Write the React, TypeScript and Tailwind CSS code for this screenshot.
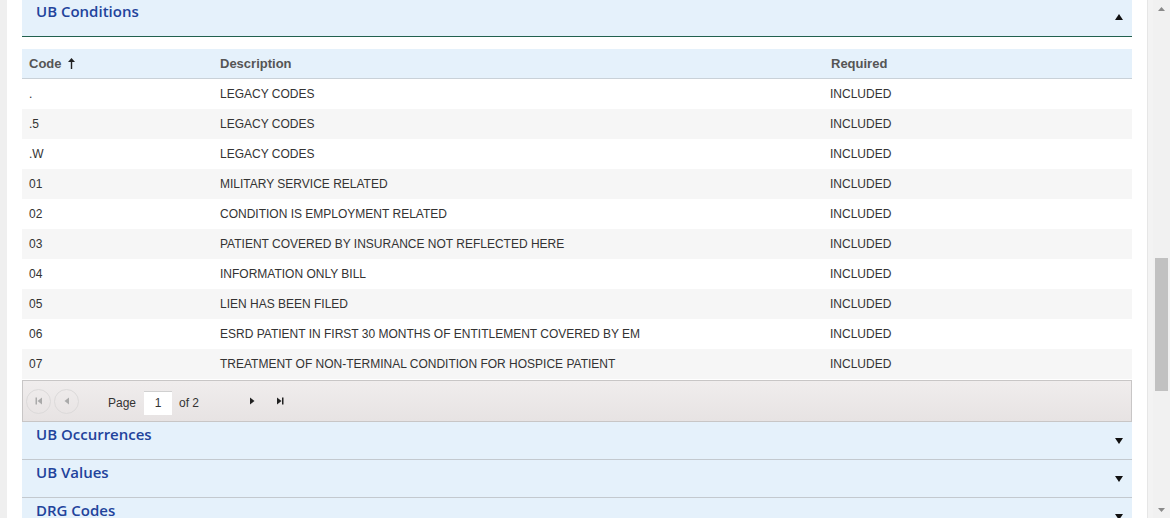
import React from "react";

interface ConditionRow {
  code: string;
  description: string;
  required: string;
}

const rows: ConditionRow[] = [
  { code: ".", description: "LEGACY CODES", required: "INCLUDED" },
  { code: ".5", description: "LEGACY CODES", required: "INCLUDED" },
  { code: ".W", description: "LEGACY CODES", required: "INCLUDED" },
  { code: "01", description: "MILITARY SERVICE RELATED", required: "INCLUDED" },
  { code: "02", description: "CONDITION IS EMPLOYMENT RELATED", required: "INCLUDED" },
  { code: "03", description: "PATIENT COVERED BY INSURANCE NOT REFLECTED HERE", required: "INCLUDED" },
  { code: "04", description: "INFORMATION ONLY BILL", required: "INCLUDED" },
  { code: "05", description: "LIEN HAS BEEN FILED", required: "INCLUDED" },
  { code: "06", description: "ESRD PATIENT IN FIRST 30 MONTHS OF ENTITLEMENT COVERED BY EM", required: "INCLUDED" },
  { code: "07", description: "TREATMENT OF NON-TERMINAL CONDITION FOR HOSPICE PATIENT", required: "INCLUDED" },
];

const Triangle = ({ up }: { up?: boolean }) => (
  <svg width="8" height="6" viewBox="0 0 8 6" className="block">
    {up ? <polygon points="4,0 8,6 0,6" fill="#111" /> : <polygon points="0,0 8,0 4,6" fill="#111" />}
  </svg>
);

// collapsed accordion panel
const Section = ({ title }: { title: string }) => (
  <div className="h-[38px] bg-[#e5f1fb] border-b border-[#c3c9cf] flex justify-between pl-[14px] pr-[9px]">
    <span className="pt-[2px] text-[15px] leading-[20px] font-semibold text-[#22439b] font-['Open_Sans',sans-serif]">
      {title}
    </span>
    <span className="pt-[16px]">
      <Triangle />
    </span>
  </div>
);

const PagerButton = ({ children, disabled }: { children: React.ReactNode; disabled?: boolean }) => (
  <div
    className={
      disabled
        ? "w-[25px] h-[25px] rounded-full border border-[#dcdada] flex items-center justify-center text-[#aaa]"
        : "w-[25px] h-[25px] rounded-full flex items-center justify-center text-[#222]"
    }
  >
    {children}
  </div>
);

const App = () => {
  return (
    <div className="w-[1170px] h-[518px] overflow-hidden flex bg-white font-['Liberation_Sans',Arial,sans-serif]">
      <div className="w-[7px] bg-[#efefef] shrink-0" />
      <div className="w-[15px] shrink-0" />

      <div className="w-[1110px] shrink-0 -mt-[1px]">
        {/* UB Conditions - expanded */}
        <div className="h-[38px] bg-[#e5f1fb] border-b border-[#22614f] flex justify-between pl-[14px] pr-[9px]">
          <span className="pt-[2px] text-[15px] leading-[20px] font-semibold text-[#22439b] font-['Open_Sans',sans-serif]">
            UB Conditions
          </span>
          <span className="pt-[15px]">
            <Triangle up />
          </span>
        </div>

        <div className="h-[12px]" />

        <div className="h-[30px] bg-[#e5f1fb] border-b border-[#c9d1d8] flex items-center text-[13px] font-bold text-[#555]">
          <div className="w-[198px] pl-[7px] flex items-center gap-[6px]">
            Code
            <svg width="7" height="11" viewBox="0 0 7 11">
              <polygon points="3.5,0 7,4 4.2,4 4.2,11 2.8,11 2.8,4 0,4" fill="#222" />
            </svg>
          </div>
          <div className="w-[611px]">Description</div>
          <div>Required</div>
        </div>

        {rows.map((row, i) => (
          <div
            key={row.code}
            className={
              "h-[30px] flex items-center text-[12px] text-[#333] " + (i % 2 === 1 ? "bg-[#f6f6f6]" : "bg-white")
            }
          >
            <div className="w-[198px] pl-[7px]">{row.code}</div>
            <div className="w-[610px]">{row.description}</div>
            <div>{row.required}</div>
          </div>
        ))}

        {/* pager */}
        <div className="h-[42px] mt-[1px] bg-gradient-to-b from-[#f0eded] to-[#e7e3e3] border border-[#c8c6c6] flex items-center pl-[3px] text-[12px] text-[#333]">
          <div className="flex gap-[3px]">
            <PagerButton disabled>
              <svg width="8" height="8" viewBox="0 0 8 8">
                <rect x="0.5" y="0.5" width="1.5" height="7" fill="currentColor" />
                <polygon points="7,0.5 7,7.5 2.5,4" fill="currentColor" />
              </svg>
            </PagerButton>
            <PagerButton disabled>
              <svg width="6" height="8" viewBox="0 0 6 8">
                <polygon points="5,0.5 5,7.5 0.5,4" fill="currentColor" />
              </svg>
            </PagerButton>
          </div>
          <span className="ml-[29px] mt-[3px]">Page</span>
          <div className="ml-[8px] mt-[3px] w-[28px] h-[24px] bg-white border-t border-[#d0d0d0] flex items-center justify-center">
            1
          </div>
          <span className="ml-[7px] mt-[3px]">of 2</span>
          <div className="ml-[40px] flex gap-[3px]">
            <PagerButton>
              <svg width="6" height="8" viewBox="0 0 6 8">
                <polygon points="1,0.5 1,7.5 5.5,4" fill="currentColor" />
              </svg>
            </PagerButton>
            <PagerButton>
              <svg width="8" height="8" viewBox="0 0 8 8">
                <polygon points="1,0.5 1,7.5 5.5,4" fill="currentColor" />
                <rect x="6" y="0.5" width="1.5" height="7" fill="currentColor" />
              </svg>
            </PagerButton>
          </div>
        </div>

        <Section title="UB Occurrences" />
        <Section title="UB Values" />
        <Section title="DRG Codes" />
      </div>

      <div className="w-[15px] shrink-0" />
      <div className="w-[6px] bg-[#f3f3f3] border-l border-[#e6e6e6] shrink-0" />

      {/* scrollbar */}
      <div className="w-[17px] shrink-0 bg-[#f1f1f1] flex flex-col items-center">
        <div className="h-[17px] flex items-center justify-center">
          <svg width="7" height="4" viewBox="0 0 7 4">
            <polygon points="3.5,0 7,4 0,4" fill="#8a8a8a" />
          </svg>
        </div>
        <div className="mt-[241px] w-[13px] h-[133px] bg-[#c1c1c1]" />
        <div className="mt-auto h-[17px] flex items-center justify-center">
          <svg width="7" height="4" viewBox="0 0 7 4">
            <polygon points="0,0 7,0 3.5,4" fill="#8a8a8a" />
          </svg>
        </div>
      </div>
    </div>
  );
};

export default App;
